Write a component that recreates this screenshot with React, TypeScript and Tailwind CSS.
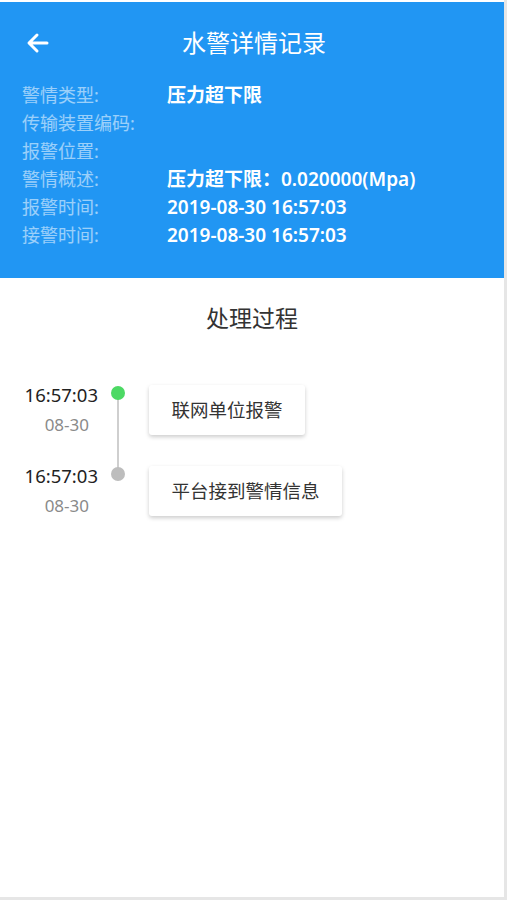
import React from "react";

const rows: [string, string][] = [
  ["警情类型:", "压力超下限"],
  ["传输装置编码:", ""],
  ["报警位置:", ""],
  ["警情概述:", "压力超下限：0.020000(Mpa)"],
  ["报警时间:", "2019-08-30 16:57:03"],
  ["接警时间:", "2019-08-30 16:57:03"],
];

export default function App() {
  return (
    <div
      className="w-[507px] h-[900px] bg-[#e6e6e6] overflow-hidden"
      style={{ fontFamily: '"Noto Sans", "Noto Sans CJK SC", sans-serif' }}
    >
      <div className="w-[504px] h-[897px] bg-white pt-[2px]">
        <div className="bg-[#2196f3] h-[276px] pt-[24px] px-[22px]">
          <div className="relative flex items-center justify-center h-[34px]">
            <svg
              className="absolute left-[4px] top-[6px]"
              width="24"
              height="22"
              viewBox="0 0 24 22"
              fill="none"
              stroke="white"
              strokeWidth="3"
              strokeLinecap="round"
              strokeLinejoin="round"
            >
              <path d="M21 11H4M11 3L3 11L11 19" />
            </svg>
            <span className="text-white text-[24px] ml-[4px]">水警详情记录</span>
          </div>
          <div className="mt-[21px] flex flex-col">
            {rows.map(([k, v]) => (
              <div key={k} className="flex h-[28px] items-center">
                <span className="w-[145px] text-[18px] text-white/55 whitespace-nowrap">{k}</span>
                <span className="text-[19px] text-white font-semibold whitespace-nowrap">{v}</span>
              </div>
            ))}
          </div>
        </div>
        <div className="text-center text-[23px] text-[#333] mt-[23px] leading-[34px]">处理过程</div>
        <div className="mt-[44px] relative">
          <div className="absolute left-[117px] top-[17px] w-[2px] h-[80px] bg-[#cfcfcf]" />
          {[
            { t: "联网单位报警", c: "bg-[#4cd964]", w: "w-[156px]" },
            { t: "平台接到警情信息", c: "bg-[#bdbdbd]", w: "w-[193px]" },
          ].map((it, i) => (
            <div key={i} className="flex h-[81px] relative">
              <div className="w-[106px] flex flex-col">
                <span className="w-[98px] text-right text-[18.5px] text-[#222] leading-[26px] mt-[3px]">16:57:03</span>
                <span className="w-[89px] text-right text-[17px] text-[#8a8a8a] leading-[24px] mt-[5px]">08-30</span>
              </div>
              <div className={`absolute left-[111px] top-[7px] w-[14px] h-[14px] rounded-full ${it.c}`} />
              <div
                className={`ml-[43px] mt-[6px] ${it.w} h-[50px] rounded-[3px] bg-white shadow-[0_2px_4px_rgba(0,0,0,0.2)] flex items-center justify-center text-[18.5px] text-[#333] whitespace-nowrap`}
              >
                {it.t}
              </div>
            </div>
          ))}
        </div>
      </div>
    </div>
  );
}
